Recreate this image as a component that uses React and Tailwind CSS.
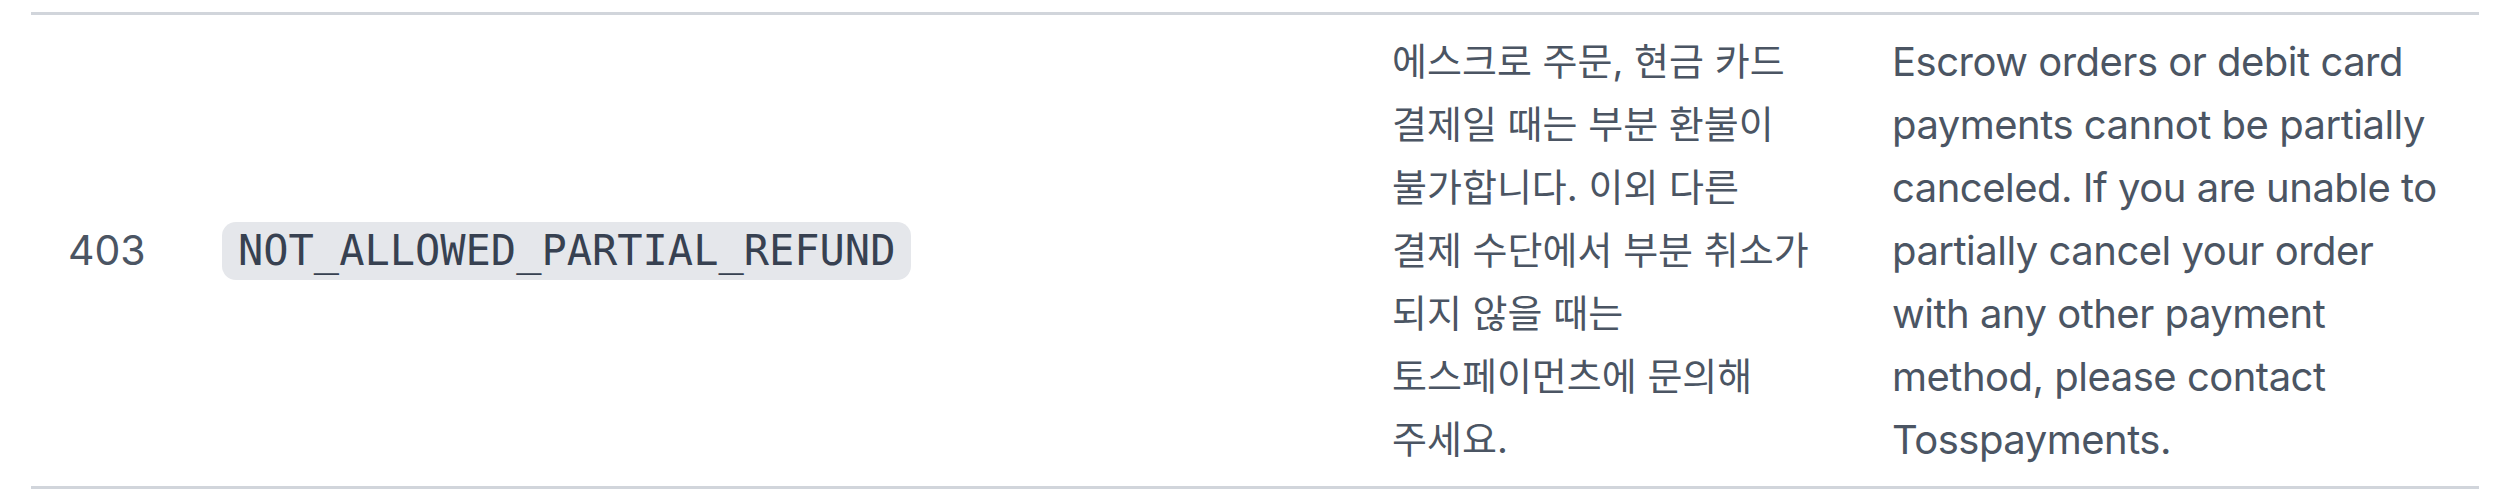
import React from 'react';

// one row of the error code table
const row = {
  status: '403',
  code: 'NOT_ALLOWED_PARTIAL_REFUND',
  ko: ['에스크로 주문, 현금 카드', '결제일 때는 부분 환불이', '불가합니다. 이외 다른', '결제 수단에서 부분 취소가', '되지 않을 때는', '토스페이먼츠에 문의해', '주세요.'],
  en: 'Escrow orders or debit card payments cannot be partially canceled. If you are unable to partially cancel your order with any other payment method, please contact Tosspayments.',
};

export default function App() {
  return (
    <div className="min-h-[496px] bg-white pl-[31px] pt-[12px]">
      <div className="w-[2448px] border-y-[3px] border-[#d1d5db] flex text-[#4b5563]">
        <div className="w-[191px] pl-[37px] self-center text-[41px] font-['Inter',sans-serif]">{row.status}</div>
        <div className="w-[1170px] self-center">
          <code className="inline-flex items-center h-[58px] px-4 rounded-[14px] bg-[#e5e7eb] text-[#374151] text-[42px] font-['DejaVu_Sans_Mono',monospace]">
            {row.code}
          </code>
        </div>
        <div className="w-[500px] py-[15px] text-[38px] leading-[63px] font-['Inter','Noto_Sans_CJK_KR',sans-serif] whitespace-nowrap">
          {row.ko.map((line, i) => (
            <div key={i}>{line}</div>
          ))}
        </div>
        <div className="flex-1 py-[15px]">
          <p className="w-[552px] text-[40px] leading-[63px] tracking-[-0.5px] font-['Inter',sans-serif]">{row.en}</p>
        </div>
      </div>
    </div>
  );
}
